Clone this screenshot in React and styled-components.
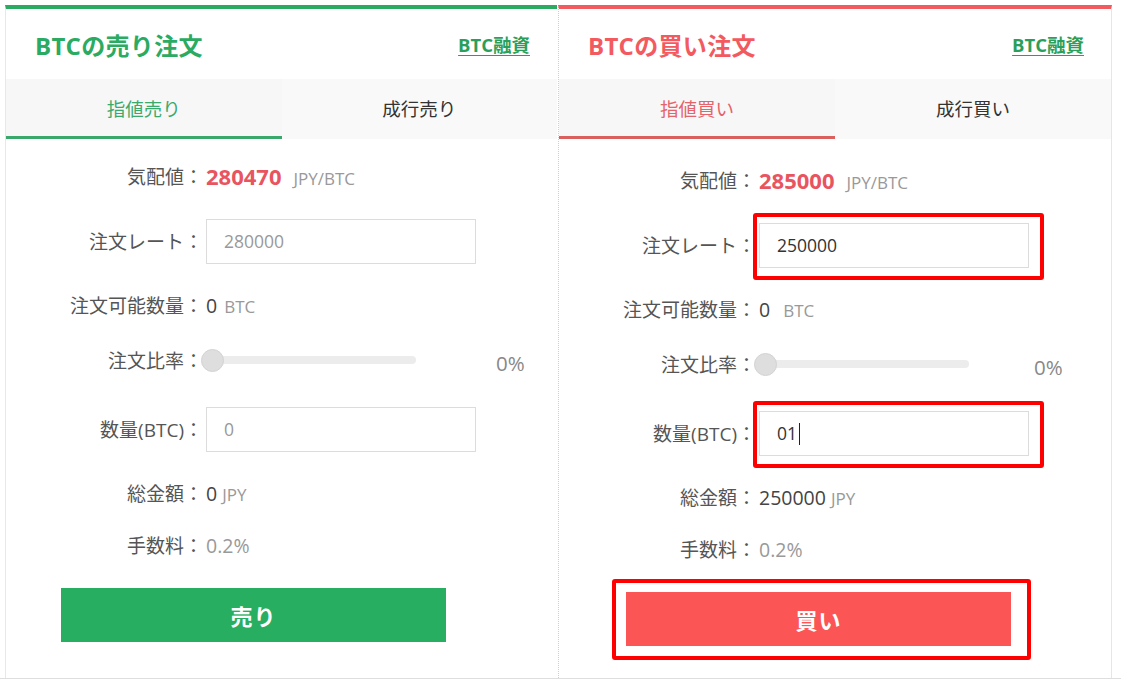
import React from "react";
import styled, { createGlobalStyle } from "styled-components";

const GREEN = "#27ae60";
const RED = "#f25a5f";

const Global = createGlobalStyle`
  body {
    margin: 0;
    background: #fff;
    font-family: "Open Sans", "Noto Sans CJK JP", sans-serif;
    color: #444;
  }
`;

const Page = styled.div`
  display: flex;
  height: 673px;
  padding: 5px 0 0 5px;
  border-bottom: 1px solid #dedede;
`;

const Panel = styled.section`
  width: ${(p) => p.$width}px;
  display: flex;
  flex-direction: column;
  border-top: 4px solid ${(p) => p.$accent};
  border-left: 1px ${(p) => (p.$first ? "solid #e8e8e8" : "dotted #cfcfcf")};
  border-right: ${(p) => (p.$first ? "none" : "1px solid #e6e6e6")};
  margin-left: ${(p) => (p.$first ? 0 : 1)}px;
`;

const Header = styled.header`
  height: 70px;
  display: flex;
  align-items: center;
  justify-content: space-between;
  padding: 0 27px 0 29px;
`;

const Title = styled.h2`
  margin: 0;
  font-size: 24px;
  font-weight: 700;
  letter-spacing: 0.3px;
  color: ${(p) => p.$color};
`;

const Link = styled.a`
  font-size: 18.5px;
  font-weight: 700;
  color: #2a9f5c;
  text-decoration: underline;
  text-underline-offset: 3px;
`;

const Tabs = styled.nav`
  display: flex;
  height: 60px;
  background: #f7f7f7;
`;

const Tab = styled.div`
  flex: 1;
  display: flex;
  align-items: center;
  justify-content: center;
  font-size: 18.5px;
  color: ${(p) => (p.$active ? p.$accent : "#333")};
  border-bottom: 3px solid ${(p) => (p.$active ? p.$line : "transparent")};
  background: ${(p) => (p.$active ? "#f7f7f7" : "#f9f9f9")};
`;

const Form = styled.div`
  flex: 1;
  display: flex;
  flex-direction: column;
  padding-top: ${(p) => p.$top}px;
`;

const Row = styled.div`
  display: grid;
  grid-template-columns: 197px 1fr;
  column-gap: 3px;
  align-items: center;
  height: ${(p) => p.$h}px;
`;

const Label = styled.span`
  text-align: right;
  font-size: 19px;
  color: #555;
  white-space: nowrap;
`;

const Value = styled.span`
  display: flex;
  align-items: baseline;
  font-size: 19.5px;
  color: ${(p) => (p.$muted ? "#999" : "#444")};
`;

const Price = styled.b`
  font-size: 22px;
  font-weight: 700;
  color: #e8545f;
`;

const Unit = styled.span`
  font-size: 17px;
  color: #999;
  margin-left: ${(p) => p.$gap || 8}px;
`;

const Field = styled.div`
  position: relative;
  width: 270px;
  height: 45px;

  ${(p) =>
    p.$marked &&
    `
    &::after {
      content: "";
      position: absolute;
      inset: -10px -15px -12px -6px;
      border: 4px solid #ff0000;
      border-radius: 3px;
      pointer-events: none;
    }
  `}
`;

const Input = styled.input`
  box-sizing: border-box;
  width: 100%;
  height: 100%;
  border: 1px solid #dcdcdc;
  padding: 0 0 0 17px;
  font-family: inherit;
  font-size: 17.5px;
  color: #333;
  outline: none;

  &::placeholder {
    color: #999;
  }
`;

const Caret = styled.span`
  position: absolute;
  left: ${(p) => p.$x}px;
  top: 12px;
  width: 1px;
  height: 22px;
  background: #222;
`;

const Slider = styled.div`
  display: flex;
  align-items: center;
`;

const Track = styled.div`
  position: relative;
  width: 210px;
  height: 8px;
  border-radius: 4px;
  background: #ececec;
`;

const Thumb = styled.span`
  position: absolute;
  left: -5px;
  top: -7px;
  width: 21px;
  height: 21px;
  border-radius: 50%;
  background: #dedede;
  border: 1px solid #d3d3d3;
`;

const Percent = styled.span`
  margin-left: ${(p) => p.$gap}px;
  margin-top: 6px;
  font-size: 20.5px;
  color: #888;
`;

const ButtonWrap = styled.div`
  position: relative;
  margin: 18px 0 0 ${(p) => p.$left}px;
  width: 385px;

  ${(p) =>
    p.$marked &&
    `
    &::after {
      content: "";
      position: absolute;
      inset: -13px -20px -14px -14px;
      border: 4px solid #ff0000;
      border-radius: 3px;
      pointer-events: none;
    }
  `}
`;

const Submit = styled.button`
  display: block;
  width: 100%;
  height: 54px;
  border: none;
  background: ${(p) => p.$bg};
  color: #fff;
  font-family: inherit;
  font-size: 22px;
  font-weight: 700;
  letter-spacing: 1px;
`;

function OrderPanel({ side, first, width, accent, tabAccent, tabLine, price, rate, ratePlaceholder, qty, total, top, btnLeft, marked, pctGap }) {
  return (
    <Panel $accent={accent} $first={first} $width={width}>
      <Header>
        <Title $color={accent}>BTCの{side}注文</Title>
        <Link>BTC融資</Link>
      </Header>
      <Tabs>
        <Tab $active $accent={tabAccent} $line={tabLine}>指値{side}</Tab>
        <Tab>成行{side}</Tab>
      </Tabs>
      <Form $top={top}>
        <Row $h={48}>
          <Label>気配値：</Label>
          <Value>
            <Price>{price}</Price>
            <Unit $gap={12}>JPY/BTC</Unit>
          </Value>
        </Row>
        <Row $h={82}>
          <Label>注文レート：</Label>
          <Field $marked={marked}>
            <Input defaultValue={rate} placeholder={ratePlaceholder} />
          </Field>
        </Row>
        <Row $h={46}>
          <Label>注文可能数量：</Label>
          <Value>
            0<Unit $gap={first ? 7 : 13}>BTC</Unit>
          </Value>
        </Row>
        <Row $h={64}>
          <Label>注文比率：</Label>
          <Slider>
            <Track>
              <Thumb />
            </Track>
            <Percent $gap={pctGap}>0%</Percent>
          </Slider>
        </Row>
        <Row $h={74}>
          <Label>数量(BTC)：</Label>
          <Field $marked={marked}>
            <Input defaultValue={qty} placeholder="0" />
            {qty && <Caret $x={40} />}
          </Field>
        </Row>
        <Row $h={54}>
          <Label>総金額：</Label>
          <Value>
            {total}
            <Unit $gap={5}>JPY</Unit>
          </Value>
        </Row>
        <Row $h={50}>
          <Label>手数料：</Label>
          <Value $muted>0.2%</Value>
        </Row>
        <ButtonWrap $left={btnLeft} $marked={marked}>
          <Submit $bg={first ? GREEN : "#fb5555"}>{side}</Submit>
        </ButtonWrap>
      </Form>
    </Panel>
  );
}

export default function App() {
  return (
    <>
      <Global />
      <Page>
        <OrderPanel
          side="売り"
          first
          width={551}
          accent="#2bab62"
          tabAccent="#3aaa6c"
          tabLine="#3aa86a"
          price="280470"
          ratePlaceholder="280000"
          total="0"
          top={13}
          btnLeft={55}
          pctGap={80}
        />
        <OrderPanel
          side="買い"
          width={552}
          accent={RED}
          tabAccent="#e5636b"
          tabLine="#d9605f"
          price="285000"
          rate="250000"
          qty="01"
          total="250000"
          top={17}
          btnLeft={67}
          marked
          pctGap={65}
        />
      </Page>
    </>
  );
}
